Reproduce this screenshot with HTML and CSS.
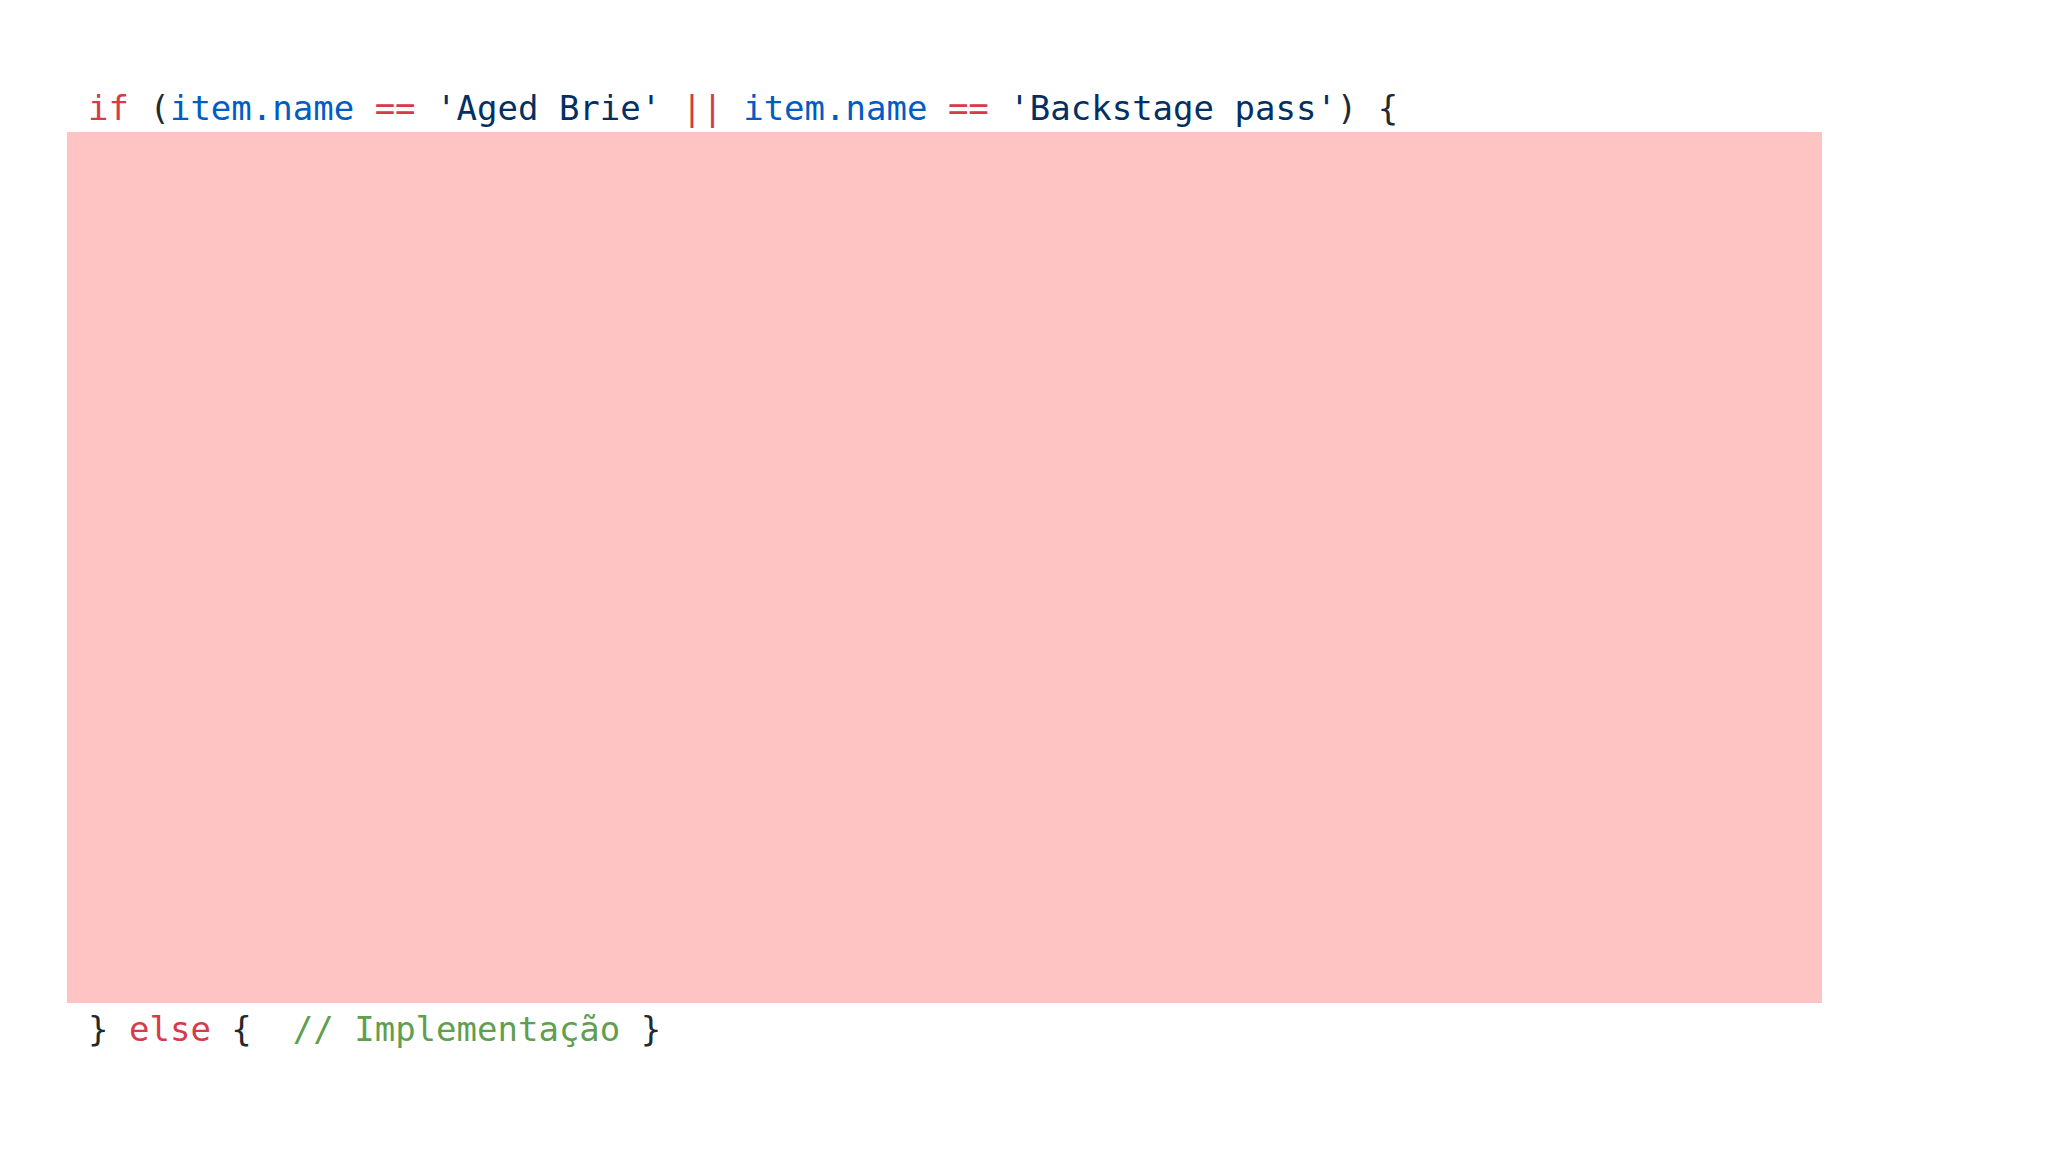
FILE: index.html
```html
<!DOCTYPE html>
<html lang="pt">
<head>
<meta charset="utf-8">
<title>Code</title>
<link rel="stylesheet" href="styles.css">
</head>
<body>
<div class="code">
  <div class="line line-first"><span class="kw">if</span> <span class="pn">(</span><span class="id">item.name</span> <span class="op">==</span> <span class="str">'Aged Brie'</span> <span class="op">||</span> <span class="id">item.name</span> <span class="op">==</span> <span class="str">'Backstage pass'</span><span class="pn">) {</span></div>
  <div class="highlight"></div>
  <div class="line line-last"><span class="pn">}</span> <span class="kw">else</span> <span class="pn">{</span>  <span class="cm">// Implementação</span> <span class="pn">}</span></div>
</div>
</body>
</html>
```

FILE: styles.css
```css
html, body {
  margin: 0;
  padding: 0;
  background: #ffffff;
}

.code {
  padding: 89px 0 0 67px;
  width: 1755px;
  font-family: "DejaVu Sans Mono", "Liberation Mono", monospace;
  font-size: 34px;
}

.line {
  height: 38px;
  line-height: 38px;
  padding-left: 21px;
  white-space: pre;
  color: #24292e;
}

.line-first {
  padding-bottom: 5px;
}

.line-last {
  margin-top: 7px;
}

.highlight {
  height: 871px;
  background: #fec4c3;
}

.kw { color: #d73a49; }
.op { color: #d73a49; }
.id { color: #005cc5; }
.str { color: #032f62; }
.pn { color: #24292e; }
.cm { color: #5f9f4f; }
```
